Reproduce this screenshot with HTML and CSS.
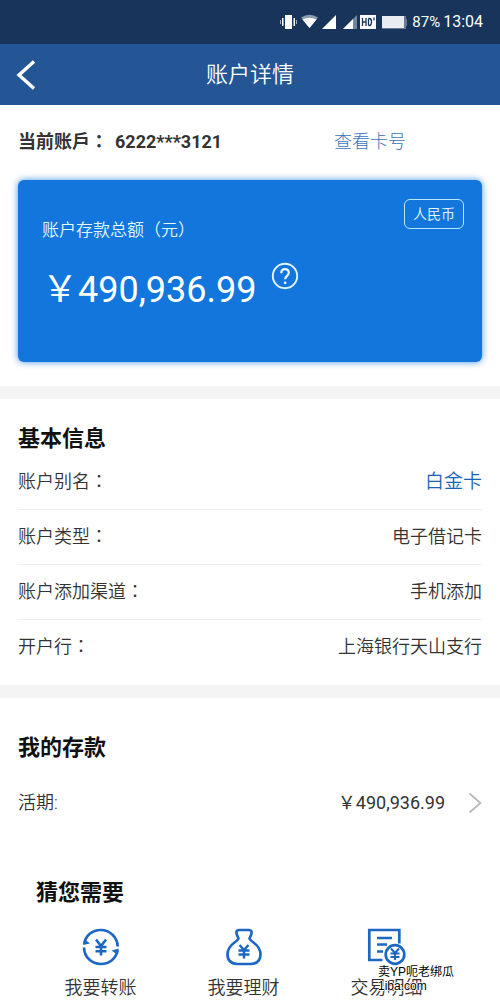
FILE: index.html
```html
<!DOCTYPE html>
<html lang="zh-CN">
<head>
<meta charset="utf-8">
<meta name="viewport" content="width=device-width, initial-scale=1">
<title>账户详情</title>
<link rel="stylesheet" href="styles.css">
</head>
<body>
<div class="status">
  <svg class="status-icons" width="128" height="16" viewBox="0 0 128 16" aria-hidden="true">
    <g fill="#fff">
      <rect x="5" y="1" width="7" height="14"/>
      <path d="M2 4h1.500v8H2zM13.500 4H15v8h-1.500z"/>
      <path d="M0 6h1v4H0zM16 6h1v4h-1z" opacity=".6"/>
      <path d="M21 3.500Q29.500-2 38 3.500L29.500 14z" opacity=".5"/>
      <path d="M22.500 5.500Q29.500 2 36.500 5.500L29.500 14z"/>
      <path d="M56 1v14H42z"/>
      <path d="M77 1v14H63z" opacity=".4"/>
      <path d="M73 5v10H63z"/>
      <rect x="80" y="1" width="16" height="14"/>
      <path d="M102 2h24v3h1v7h-1v3h-24z" opacity=".35"/>
      <rect x="102" y="2" width="22" height="12" fill="#e9edf2"/>
    </g>
    <path d="M82.500 4v8M86 4v8M82.500 8H86M88.500 4.500v7M88.500 4.500h1q2 0 2 3.500t-2 3.500h-1M94 3.500v3" fill="none" stroke="#18345a" stroke-width="1.300"/>
  </svg>
  <span class="battery">87%</span>
  <span class="clock">13:04</span>
</div>
<header class="topbar">
  <button class="back" type="button" aria-label="返回">
    <svg width="22" height="32" viewBox="0 0 22 32" aria-hidden="true"><path d="M19 2.500L4 16L19 29.500" fill="none" stroke="#fff" stroke-width="3.400"/></svg>
  </button>
  <h1 class="title">账户详情</h1>
</header>
<main>
  <section class="overview">
    <div class="account">
      <p class="account-no" lang="zh-TW"><span>当前账戶：</span><span>6222***3121</span></p>
      <a class="show-no" href="#number">查看卡号</a>
    </div>
    <div class="card">
      <span class="currency">人民币</span>
      <p class="card-label">账户存款总额（元）</p>
      <div class="amount-line">
        <p class="amount">￥490,936.99</p>
        <button class="help" type="button" aria-label="帮助">
          <svg width="28" height="28" viewBox="0 0 28 28" aria-hidden="true"><g fill="none" stroke="#e6f5ff" stroke-width="1.900"><circle cx="14" cy="14" r="12.200"/><path stroke-width="2.200" d="M10.300 11.200C10.300 8.500 11.900 7.200 14 7.200s3.800 1.400 3.800 3.600c0 2.900-3.700 3.200-3.700 6.500"/></g><circle cx="14.100" cy="20.800" r="1.400" fill="#e6f5ff"/></svg>
        </button>
      </div>
    </div>
  </section>
  <section class="info">
    <h2>基本信息</h2>
    <dl class="rows">
      <div class="row"><dt>账户别名<span lang="zh-TW">：</span></dt><dd><a href="#alias">白金卡</a></dd></div>
      <div class="row"><dt>账户类型<span lang="zh-TW">：</span></dt><dd>电子借记卡</dd></div>
      <div class="row"><dt>账户添加渠道<span lang="zh-TW">：</span></dt><dd>手机添加</dd></div>
      <div class="row"><dt>开户行<span lang="zh-TW">：</span></dt><dd>上海银行天山支行</dd></div>
    </dl>
  </section>
  <section class="deposits">
    <h2>我的存款</h2>
    <a class="deposit" href="#current">
      <span>活期:</span>
      <span class="deposit-amount">￥490,936.99</span>
      <svg width="14" height="22" viewBox="0 0 14 22" aria-hidden="true"><path d="M1.500 1.500L12.500 11L1.500 20.500" fill="none" stroke="#b9b9b9" stroke-width="1.800"/></svg>
    </a>
  </section>
  <section class="suggest">
    <h2>猜您需要</h2>
    <nav class="actions">
      <a class="action" href="#transfer">
        <svg width="40" height="40" viewBox="0 0 40 40" aria-hidden="true"><g fill="none" stroke="#1c67c4" stroke-width="2.700"><path d="M3.200 17C4.500 8.500 11.300 3 19.700 3c9.300 0 16.700 7.200 17 16.500"/><path d="M36.700 23C35.200 31.500 28.300 37 20 37 10.500 37 3.200 30 3 20.500"/><path d="M15 12.500l5 6.500 5-6.500M20 18v10.500M14.500 20h11M14.500 24.300h11" stroke-width="2.600"/></g><path d="M2 18l7-1.500-4.500-3.500zM38 21.500l-7.500 2 5 3.500z" fill="#1c67c4"/></svg>
        <span>我要转账</span>
      </a>
      <a class="action" href="#wealth">
        <svg width="40" height="40" viewBox="0 0 40 40" aria-hidden="true"><g fill="none" stroke="#1c67c4" stroke-width="2.700" stroke-linejoin="round"><path d="M14.500 11.500L12.800 7.500q-1.300-4.500 2.200-4.500h10q3.500 0 2.200 4.500l-1.700 4q1 2 4 4 7 5 7 12 0 9-10 9.500h-13q-10-.5-10-9.500 0-7 7-12 3-2 4-4z"/><path d="M15.500 18l4.500 5 4.500-5M20 22v9.500M14.500 23.500h11M14.500 27.500h11" stroke-width="2.500"/></g></svg>
        <span>我要理财</span>
      </a>
      <a class="action" href="#history">
        <svg width="40" height="40" viewBox="0 0 40 40" aria-hidden="true"><g fill="none" stroke="#1c67c4" stroke-width="2.700"><path d="M15.500 33H2.300V3h30v13.500M10 11h15M10 17.500h10M10 24.500h6"/><circle cx="28" cy="27.500" r="9.300"/><path d="M24 21.500l4 4.500 4-4.500M28 25v8M23.500 26.500h9M23.500 30h9" stroke-width="2"/></g></svg>
        <span>交易明细</span>
      </a>
    </nav>
    <p class="watermark">卖YP呃老绑瓜<br>1iba.com</p>
  </section>
</main>
</body>
</html>
```
FILE: styles.css
```css
* {
  box-sizing: border-box;
}

body,
h1,
h2,
p,
dl,
dd {
  margin: 0;
}

body {
  background: #fff;
  color: #333;
  font-family: Roboto, "Noto Sans CJK SC", sans-serif;
  font-size: 18px;
  font-weight: 350;
  line-height: 26px;
}

[lang="zh-TW"] {
  font-family: Roboto, "Noto Sans CJK TC", sans-serif;
}

a {
  color: inherit;
  text-decoration: none;
}

button {
  padding: 0;
  border: 0;
  background: none;
}

svg {
  display: block;
  flex: none;
}

.status {
  display: flex;
  align-items: center;
  justify-content: flex-end;
  height: 44px;
  padding-right: 17px;
  background: #18345a;
  color: #fff;
  font-weight: 400;
}

.status-icons {
  margin-right: 4px;
}

.battery {
  margin-right: 3px;
  font-size: 15px;
}

.clock {
  font-size: 16px;
}

.topbar {
  display: grid;
  grid-template-columns: 48px 1fr 48px;
  align-items: center;
  height: 61px;
  background: #245696;
  color: #fff;
}

.back {
  padding-left: 15px;
}

.title {
  font-size: 22px;
  font-weight: 350;
  text-align: center;
}

.overview {
  padding: 24px 18px;
}

.account {
  display: grid;
  grid-template-columns: 316px 1fr;
}

.account-no {
  display: flex;
  gap: 7px;
  font-weight: 700;
}

.show-no {
  color: #3973bd;
  font-weight: 300;
}

.card {
  position: relative;
  margin-top: 25px;
  padding: 37px 24px 48px;
  border-radius: 6px;
  background: #1276dc;
  box-shadow: 0 0 7px rgba(18, 118, 220, 0.8);
  color: #e6f8ff;
}

.currency {
  position: absolute;
  top: 19px;
  right: 18px;
  padding: 1px 8px;
  border: 1px solid #b8e8ff;
  border-radius: 6px;
  font-size: 14px;
}

.card-label {
  font-size: 17px;
}

.amount-line {
  display: flex;
  align-items: flex-start;
  gap: 15px;
  padding-top: 19px;
}

.amount {
  padding-top: 4px;
  color: #fff;
  font-size: 36px;
  font-weight: 400;
  line-height: 48px;
}

.info {
  padding: 26px 18px 12px;
  border-top: 13px solid #f4f4f4;
}

h2 {
  color: #111;
  font-size: 22px;
  font-weight: 700;
  line-height: 28px;
}

.row {
  display: flex;
  justify-content: space-between;
  padding: 14px 0;
  border-bottom: 1px solid #eee;
}

.row:first-child {
  padding-top: 16px;
}

.row:last-child {
  padding-bottom: 13px;
  border-bottom: 0;
}

.row a {
  color: #1b63b4;
  font-size: 19px;
}

.deposits {
  padding: 36px 18px 0;
  border-top: 13px solid #f4f4f4;
}

.deposit {
  display: flex;
  align-items: center;
  padding: 28px 0;
}

.deposit-amount {
  margin: 0 23px 0 auto;
  font-weight: 400;
}

.suggest {
  position: relative;
  padding-top: 35px;
}

.suggest h2 {
  padding-left: 36px;
}

.actions {
  display: grid;
  grid-template-columns: repeat(3, 1fr);
  padding: 20px 42px 0 29px;
}

.action {
  display: flex;
  flex-direction: column;
  align-items: center;
  gap: 8px;
}

.watermark {
  position: absolute;
  right: 46px;
  bottom: 8px;
  color: #000;
  font-family: "Liberation Sans", "Noto Sans CJK SC", sans-serif;
  font-size: 12px;
  font-weight: 400;
  line-height: 14px;
  text-shadow: 1px 0 #fff, -1px 0 #fff, 0 1px #fff, 0 -1px #fff;
}
```
